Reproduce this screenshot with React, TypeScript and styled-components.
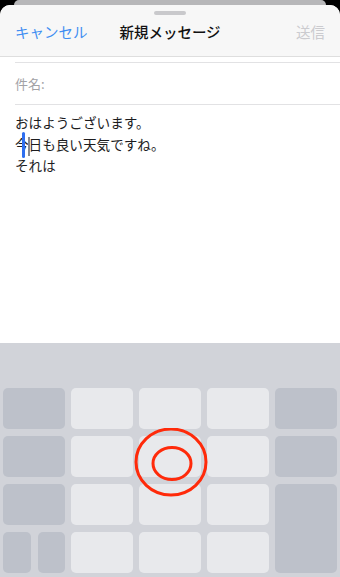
import React from "react";
import styled, { createGlobalStyle } from "styled-components";

const GlobalStyle = createGlobalStyle`
  html, body {
    margin: 0;
    padding: 0;
    background: #000;
  }
  body {
    font-family: "Noto Sans CJK JP", "Noto Sans", sans-serif;
  }
`;

const Screen = styled.div`
  width: 340px;
  height: 577px;
  background: #000;
  overflow: hidden;
  display: flex;
  flex-direction: column;
`;

const BackSheet = styled.div`
  height: 5px;
  margin: 0 14px;
  background: #b7b7b9;
  border-radius: 10px 10px 0 0;
  flex-shrink: 0;
`;

const Sheet = styled.div`
  flex: 1;
  background: #fff;
  border-radius: 10px 10px 0 0;
  overflow: hidden;
  display: flex;
  flex-direction: column;
  position: relative;
`;

const Header = styled.div`
  height: 51px;
  background: #f7f7f7;
  border-bottom: 1px solid #dedede;
  display: flex;
  flex-direction: column;
  align-items: center;
  flex-shrink: 0;
`;

const Grabber = styled.div`
  width: 32px;
  height: 4px;
  border-radius: 2px;
  background: #c9c9cc;
  margin-top: 6px;
`;

const NavBar = styled.div`
  width: 100%;
  box-sizing: border-box;
  padding: 0 15px;
  margin-top: 3px;
  display: grid;
  grid-template-columns: 1fr auto 1fr;
  align-items: center;
  height: 26px;
`;

const NavButton = styled.span<{ $disabled?: boolean }>`
  font-size: 14.5px;
  white-space: nowrap;
  color: ${(p) => (p.$disabled ? "#cbcbcf" : "#3f8ef2")};
  text-align: ${(p) => (p.$disabled ? "right" : "left")};
`;

const Title = styled.span`
  font-size: 14.5px;
  font-weight: 500;
  color: #111;
  white-space: nowrap;
`;

const FieldRow = styled.div<{ $h: number }>`
  height: ${(p) => p.$h}px;
  margin-left: 15px;
  border-bottom: 1px solid #e2e2e4;
  display: flex;
  align-items: center;
  flex-shrink: 0;
`;

const FieldLabel = styled.span`
  font-size: 13px;
  color: #a2a2a6;
`;

const Body = styled.div`
  padding: 7px 15px 0;
  font-size: 13.6px;
  line-height: 21.5px;
  color: #1c1c1e;
  position: relative;
`;

const Line = styled.div`
  white-space: nowrap;
`;

const Caret = styled.span`
  position: absolute;
  left: 28px;
  top: 32px;
  width: 1.5px;
  height: 19px;
  background: #8a8a90;
`;

const Handle = styled.span`
  position: absolute;
  left: 22px;
  top: 27px;
  width: 2.5px;
  height: 26px;
  border-radius: 2px;
  background: #2f6ff0;
`;

const Keyboard = styled.div`
  margin-top: auto;
  height: 234px;
  background: #d1d3d9;
  padding: 45px 3px 0;
  box-sizing: border-box;
  display: grid;
  grid-template-columns: repeat(5, 62px);
  grid-template-rows: repeat(4, 41px);
  column-gap: 6px;
  row-gap: 7px;
  flex-shrink: 0;
`;

const Key = styled.div<{ $dark?: boolean; $span?: number }>`
  border-radius: 5px;
  background: ${(p) => (p.$dark ? "#bdc1ca" : "#e8e9ec")};
  grid-row: ${(p) => (p.$span ? `span ${p.$span}` : "auto")};
`;

const SplitKey = styled.div`
  display: grid;
  grid-template-columns: 28px 27px;
  column-gap: 7px;
`;

const TapMark = styled.svg`
  position: absolute;
  left: 134px;
  top: 423px;
  pointer-events: none;
`;

export default function App() {
  return (
    <Screen>
      <GlobalStyle />
      <BackSheet />
      <Sheet>
        <Header>
          <Grabber />
          <NavBar>
            <NavButton>キャンセル</NavButton>
            <Title>新規メッセージ</Title>
            <NavButton $disabled>送信</NavButton>
          </NavBar>
        </Header>
        <FieldRow $h={5} />
        <FieldRow $h={41}>
          <FieldLabel>件名:</FieldLabel>
        </FieldRow>
        <Body>
          <Line>おはようございます。</Line>
          <Line>今日も良い天気ですね。</Line>
          <Line>それは</Line>
          <Handle />
          <Caret />
        </Body>
        <Keyboard>
          <Key $dark />
          <Key />
          <Key />
          <Key />
          <Key $dark />
          <Key $dark />
          <Key />
          <Key />
          <Key />
          <Key $dark />
          <Key $dark />
          <Key />
          <Key />
          <Key />
          <Key $dark $span={2} />
          <SplitKey>
            <Key $dark />
            <Key $dark />
          </SplitKey>
          <Key />
          <Key />
          <Key />
        </Keyboard>
        <TapMark width="74" height="74" viewBox="0 0 74 74">
          <ellipse cx="37" cy="34" rx="35" ry="33" fill="none" stroke="#ff2a0a" strokeWidth="3" />
          <ellipse cx="38" cy="35.5" rx="19" ry="16" fill="none" stroke="#ff2a0a" strokeWidth="3" />
        </TapMark>
      </Sheet>
    </Screen>
  );
}
